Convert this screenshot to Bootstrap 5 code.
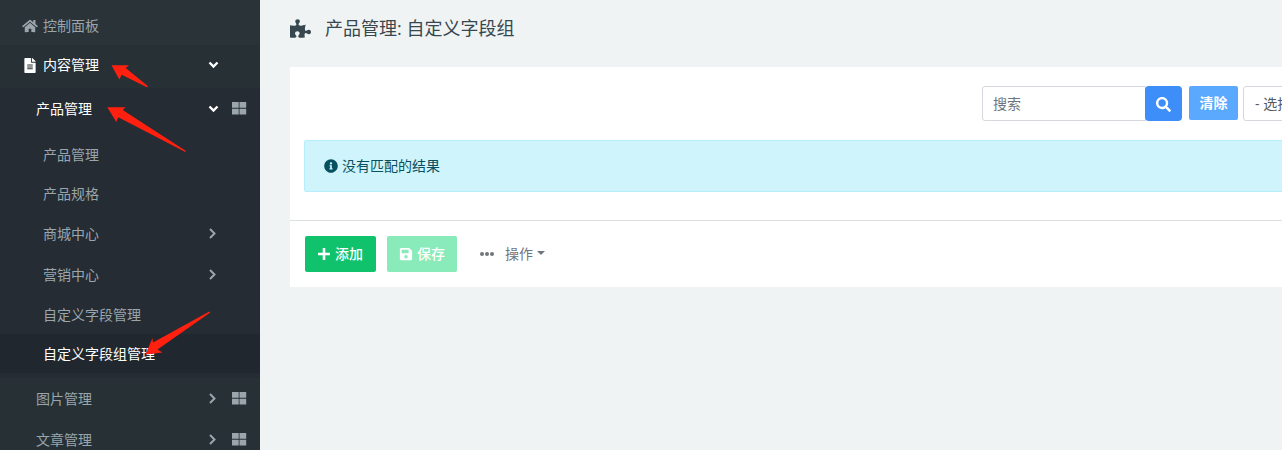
<!DOCTYPE html>
<html lang="zh-CN">
<head>
<meta charset="utf-8">
<meta name="viewport" content="width=device-width, initial-scale=1">
<title>产品管理: 自定义字段组</title>
<link href="https://cdn.jsdelivr.net/npm/bootstrap@5.3.0/dist/css/bootstrap.min.css" rel="stylesheet">
<style>
body{font-family:"Open Sans","Noto Sans CJK SC",sans-serif;font-size:14px;line-height:20px;background:#eff3f4;overflow:hidden}
.sidebar{width:260px;height:100vh;background:#263035;overflow:hidden}
.sidebar a{color:#9aa5ac;text-decoration:none;height:39px;padding-left:43px;padding-right:13px}
.sidebar a.has-sub{height:41px}
.sidebar .top-link{padding-left:22px}
.sidebar .home-link{height:45px;padding-top:7px;background:#293338}
.sidebar .group-link{height:43px;padding-bottom:3px}
.sidebar a.sub-link{padding-left:36px;height:41px}
.sidebar a.sub-link.open-link{height:42px}
.sidebar a.lit{color:#fff}
.sidebar a.current{background:#20272e}
.sub-open{background:#252c33;padding-bottom:5px}
.sub-open>ul{padding-top:5px}
.ico-slot{width:16px;margin-right:5px}
.chev{width:14px;height:14px;margin-right:11px}
.chev-right{margin-right:12px}
.tile{width:16px;height:16px;color:#9aa5ac}
.tile-gap{width:16px}
.marks{z-index:5;left:0;top:0;pointer-events:none}
.page-title{font-size:18px;line-height:24px;color:#37474f;gap:14px;padding:16px 0 27px}
.main-area{padding-left:30px;overflow:hidden}
.panel{margin-right:-120px}
.tools{padding:19px 14px 19px}
.form-control,.form-select,.btn{font-size:14px;line-height:20px}
.search-box{width:200px}
.search-box .form-control,.filter{border-color:#d5d8dd;padding:6px 11px;height:35px;color:#555b61;border-radius:3px}
.search-box .form-control::placeholder{color:#6c757d}
.search-box .form-control{padding-left:10px}
.search-box button.btn{background:#3d8ef8;width:37px;padding:0;border:0;border-radius:4px!important}
.btn-wipe{background:#5ba8ff;color:#fff;padding:0;width:49px;height:34px;margin:0 5px 0 7px;border:0;border-radius:2px;font-weight:700}
.filter{width:145px}
.notice{background:#cff4fc;border:1px solid #b6effb;color:#055160;padding:15px 19px;border-radius:2px;margin:0 14px 28px}
.foot-bar{border-top:1px solid #dcdfe1;padding:15px;gap:11px}
.foot-bar .btn{height:36px;padding:0 12px;border-radius:2px;border:0;font-weight:500}
.foot-bar .btn-plus{background:#11c26d;color:#fff;width:71px}
.btn-keep,.btn-keep:disabled{background:#8aebba;color:#fff;opacity:1}
.foot-bar .btn-act{color:#70767b;font-weight:400}
.dots{margin-right:11px}
</style>
</head>
<body>
<svg width="0" height="0" class="position-absolute" aria-hidden="true">
<symbol id="right" viewBox="0 0 14 14"><path d="M4 2 8.500 6.500 4 11" fill="none" stroke="currentColor" stroke-width="2"/></symbol>
<symbol id="down" viewBox="0 0 14 14"><path d="M3.500 4.500 7.500 8.500 11.500 4.500" fill="none" stroke="currentColor" stroke-width="2.400"/></symbol>
<symbol id="tiles" viewBox="0 0 16 16"><path fill="currentColor" d="M1 1h6.700v5.800H1zM8.500 1H15.200v5.800H8.500zM1 7.800h6.700v5.800H1zM8.500 7.800H15.200v5.800H8.500z"/></symbol>
</svg>
<div class="d-flex">
<nav class="sidebar flex-shrink-0 position-relative" aria-label="主菜单">
<ul class="list-unstyled mb-0">
<li><a href="#" class="top-link home-link d-flex align-items-center"><svg class="ico-slot" height="14" viewBox="0 0 576 512" fill="currentColor"><path d="M280.370 148.260 96 300.110V464a16 16 0 0 0 16 16l112.060-.29a16 16 0 0 0 15.920-16V368a16 16 0 0 1 16-16h64a16 16 0 0 1 16 16v95.640a16 16 0 0 0 16 16.050L464 480a16 16 0 0 0 16-16V300L295.670 148.260a12.190 12.190 0 0 0-15.300 0zM571.600 251.470 488 182.560V44.050a12 12 0 0 0-12-12h-56a12 12 0 0 0-12 12v72.610L318.470 43a48 48 0 0 0-61 0L4.340 251.470a12 12 0 0 0-1.600 16.900l25.500 31A12 12 0 0 0 45.150 301l235.220-193.740a12.190 12.190 0 0 1 15.300 0L530.900 301a12 12 0 0 0 16.900-1.600l25.500-31a12 12 0 0 0-1.700-16.930z"/></svg>控制面板</a></li>
<li><a href="#" class="top-link group-link lit d-flex align-items-center"><svg class="ico-slot" height="15" viewBox="0 0 384 512" fill="currentColor"><path d="M224 136V0H24C10.700 0 0 10.700 0 24v464c0 13.300 10.700 24 24 24h336c13.300 0 24-10.700 24-24V160H248c-13.200 0-24-10.800-24-24zm64 236c0 6.600-5.400 12-12 12H108c-6.600 0-12-5.400-12-12v-8c0-6.600 5.400-12 12-12h168c6.600 0 12 5.400 12 12v8zm0-64c0 6.600-5.400 12-12 12H108c-6.600 0-12-5.400-12-12v-8c0-6.600 5.400-12 12-12h168c6.600 0 12 5.400 12 12v8zm0-72v8c0 6.600-5.400 12-12 12H108c-6.600 0-12-5.400-12-12v-8c0-6.600 5.400-12 12-12h168c6.600 0 12 5.400 12 12zm96-114v6H256V0h6c6.400 0 12.500 2.500 17 7l98 98c4.500 4.500 7 10.600 7 17z"/></svg>内容管理<svg class="chev ms-auto"><use href="#down"/></svg><span class="tile-gap"></span></a>
<ul class="list-unstyled">
<li class="sub-open"><a href="#" class="sub-link open-link lit d-flex align-items-center">产品管理<svg class="chev ms-auto"><use href="#down"/></svg><svg class="tile"><use href="#tiles"/></svg></a>
<ul class="list-unstyled">
<li><a href="#" class="d-flex align-items-center">产品管理</a></li>
<li><a href="#" class="d-flex align-items-center">产品规格</a></li>
<li><a href="#" class="has-sub d-flex align-items-center">商城中心<svg class="chev ms-auto"><use href="#right"/></svg><span class="tile-gap"></span></a></li>
<li><a href="#" class="has-sub d-flex align-items-center">营销中心<svg class="chev ms-auto"><use href="#right"/></svg><span class="tile-gap"></span></a></li>
<li><a href="#" class="d-flex align-items-center">自定义字段管理</a></li>
<li><a href="#" class="current lit d-flex align-items-center" aria-current="page">自定义字段组管理</a></li>
</ul></li>
<li><a href="#" class="sub-link d-flex align-items-center">图片管理<svg class="chev ms-auto"><use href="#right"/></svg><svg class="tile"><use href="#tiles"/></svg></a></li>
<li><a href="#" class="sub-link d-flex align-items-center">文章管理<svg class="chev ms-auto"><use href="#right"/></svg><svg class="tile"><use href="#tiles"/></svg></a></li>
</ul></li>
</ul>
<svg class="marks position-absolute" width="260" height="450" viewBox="0 0 260 450" fill="#ff2010" aria-hidden="true">
<path d="M111.500 65.300H129L125.700 68 148 86.300 147 87.200 121.700 74.700 119.300 79.500z"/>
<path d="M107.300 107.300H125.600L122.700 110 186 151 185.300 152 118.300 117.300 116.300 122z"/>
<path d="M145.500 354.500 152.500 338 153 342.500 209.300 311.500 210.300 312.500 157.500 349.500 162.500 352.500z"/>
</svg>
</nav>
<main class="main-area flex-grow-1">
<h1 class="page-title d-flex align-items-center mb-0 fw-normal"><svg width="21" height="19" viewBox="0 0 576 512" fill="currentColor"><path d="M519.442 288.651c-41.519 0-59.500 31.593-82.058 31.593C377.409 320.244 432 144 432 144s-196.288 80-196.288-3.297c0-35.827 36.288-46.250 36.288-85.985C272 19.216 243.885 0 210.539 0c-34.654 0-66.366 18.891-66.366 56.346 0 41.364 31.711 59.277 31.711 81.750C175.885 207.719 0 166.758 0 166.758v333.237s178.635 41.047 178.635-28.662c0-22.473-40-40.107-40-81.471 0-37.456 29.250-56.346 63.577-56.346 33.673 0 61.788 19.216 61.788 54.717 0 39.735-36.288 50.158-36.288 85.985 0 60.803 129.675 25.730 181.230 25.730 0 0-34.725-120.101 25.827-120.101 35.962 0 46.423 36.152 86.308 36.152C556.712 416 576 387.990 576 354.443c0-34.199-18.962-65.792-56.558-65.792z"/></svg>产品管理: 自定义字段组</h1>
<section class="panel bg-white">
<form class="tools d-flex justify-content-end align-items-start">
<div class="search-box input-group flex-nowrap"><input type="search" class="form-control" placeholder="搜索" aria-label="搜索"><button type="button" class="btn" aria-label="搜索"><svg width="15" height="15" viewBox="0 0 512 512" fill="#fff"><path d="M505 442.700 405.300 343c-4.500-4.500-10.600-7-17-7H372c27.600-35.300 44-79.700 44-128C416 93.100 322.900 0 208 0S0 93.100 0 208s93.100 208 208 208c48.300 0 92.700-16.400 128-44v16.300c0 6.400 2.500 12.500 7 17l99.700 99.700c9.400 9.400 24.600 9.400 33.900 0l28.300-28.300c9.400-9.400 9.400-24.600.1-34zM208 336c-70.700 0-128-57.200-128-128 0-70.700 57.200-128 128-128 70.700 0 128 57.200 128 128 0 70.700-57.200 128-128 128z"/></svg></button></div>
<button type="reset" class="btn btn-wipe">清除</button>
<select class="filter form-select" aria-label="选择状态"><option>- 选择状态 -</option></select>
</form>
<div class="notice d-flex align-items-center gap-1" role="status"><svg width="14" height="14" viewBox="0 0 512 512" fill="currentColor"><path d="M256 8C119.043 8 8 119.083 8 256c0 136.997 111.043 248 248 248s248-111.003 248-248C504 119.083 392.957 8 256 8zm0 110c23.196 0 42 18.804 42 42s-18.804 42-42 42-42-18.804-42-42 18.804-42 42-42zm56 254c0 6.627-5.373 12-12 12h-88c-6.627 0-12-5.373-12-12v-24c0-6.627 5.373-12 12-12h12v-64h-12c-6.627 0-12-5.373-12-12v-24c0-6.627 5.373-12 12-12h64c6.627 0 12 5.373 12 12v100h12c6.627 0 12 5.373 12 12v24z"/></svg>没有匹配的结果</div>
<div class="foot-bar d-flex align-items-center">
<button type="button" class="btn btn-plus d-flex align-items-center gap-1"><svg width="14" height="14" viewBox="0 0 14 14"><path d="M7 1v12M1 7h12" stroke="#fff" stroke-width="2.600"/></svg>添加</button>
<button type="button" class="btn btn-keep d-flex align-items-center gap-1" disabled><svg width="14" height="14" viewBox="0 0 448 512" fill="#fff"><path d="M433.941 129.941l-83.882-83.882A48 48 0 0 0 316.118 32H48C21.490 32 0 53.490 0 80v352c0 26.510 21.490 48 48 48h352c26.510 0 48-21.490 48-48V163.882a48 48 0 0 0-14.059-33.941zM224 416c-35.346 0-64-28.654-64-64 0-35.346 28.654-64 64-64s64 28.654 64 64c0 35.346-28.654 64-64 64zm96-304.520V212c0 6.627-5.373 12-12 12H76c-6.627 0-12-5.373-12-12V108c0-6.627 5.373-12 12-12h228.520c3.183 0 6.235 1.264 8.485 3.515l3.480 3.480A11.996 11.996 0 0 1 320 111.480z"/></svg>保存</button>
<button type="button" class="btn btn-act dropdown-toggle"><svg class="dots" width="14" height="14" viewBox="0 0 14 14" fill="currentColor"><circle cx="2" cy="6" r="2"/><circle cx="7" cy="6" r="2"/><circle cx="12" cy="6" r="2"/></svg>操作</button>
</div>
</section>
</main>
</div>
<script src="https://cdn.jsdelivr.net/npm/bootstrap@5.3.0/dist/js/bootstrap.bundle.min.js"></script>
</body>
</html>
